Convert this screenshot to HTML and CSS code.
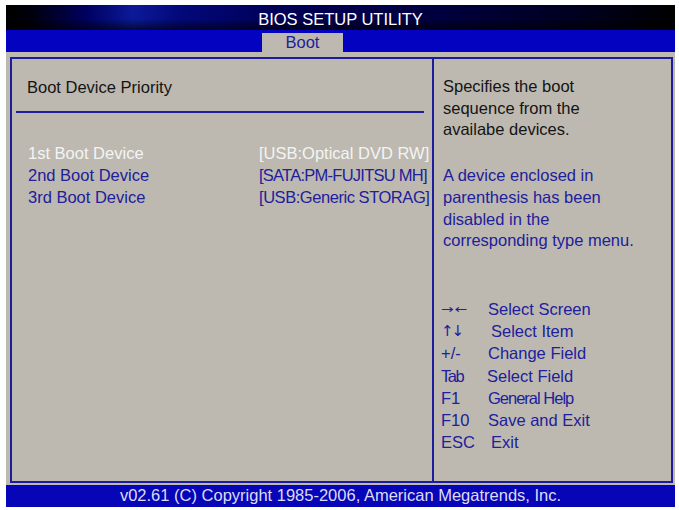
FILE: index.html
```html
<!DOCTYPE html>
<html>
<head>
<meta charset="utf-8">
<title>BIOS Setup Utility</title>
<link rel="stylesheet" href="styles.css">
</head>
<body>
<div class="screen">
  <div class="titlebar">BIOS SETUP UTILITY</div>
  <div class="tabbar"><div class="tab">Boot</div></div>
  <div class="main">
    <div class="frame">
      <div class="left">
        <div class="heading">Boot Device Priority</div>
        <div class="rule"></div>
        <div class="items">
          <div class="label sel">1st Boot Device</div><div class="value sel">[USB:Optical DVD RW]</div>
          <div class="label">2nd Boot Device</div><div class="value tight">[SATA:PM-FUJITSU MH]</div>
          <div class="label">3rd Boot Device</div><div class="value semi">[USB:Generic STORAG]</div>
        </div>
      </div>
      <div class="right">
        <div class="help">Specifies the boot<br>sequence from the<br>availabe devices.</div>
        <div class="note">A device enclosed in<br>parenthesis has been<br>disabled in the<br>corresponding type menu.</div>
        <div class="keys">
          <div class="key lr">&rarr;&larr;</div><div class="desc">Select Screen</div>
          <div class="key ud">&uarr;&darr;</div><div class="desc nudge">Select Item</div>
          <div class="key">+/-</div><div class="desc">Change Field</div>
          <div class="key narrow">Tab</div><div class="desc back">Select Field</div>
          <div class="key">F1</div><div class="desc condensed">General Help</div>
          <div class="key">F10</div><div class="desc">Save and Exit</div>
          <div class="key">ESC</div><div class="desc nudge">Exit</div>
        </div>
      </div>
    </div>
  </div>
  <div class="footer">v02.61 (C) Copyright 1985-2006, American Megatrends, Inc.</div>
</div>
</body>
</html>
```

FILE: styles.css
```css
html, body {
  margin: 0;
  padding: 0;
  background: #ffffff;
}

body {
  font-family: "Liberation Sans", Arial, sans-serif;
  font-size: 16.5px;
}

.screen {
  width: 669px;
  margin: 5px 0 0 6px;
}

.titlebar {
  height: 22px;
  padding-top: 3px;
  line-height: 22px;
  text-align: center;
  color: #ffffff;
  background:
    linear-gradient(to bottom, rgba(0,0,0,0) 55%, rgba(0,0,0,0.65) 100%),
    linear-gradient(to right, #000000 0%, #00000e 4%, #000060 12%, #0b1a98 19%, #03087a 26%, #000058 40%, #00003e 65%, #000020 85%, #000000 100%);
}

.tabbar {
  height: 19px;
  padding-top: 3px;
  background: #0202c0;
  display: flex;
}

.tab {
  margin-left: 256px;
  width: 81px;
  height: 19px;
  line-height: 18px;
  text-align: center;
  background: #bdb9b0;
  color: #20209c;
}

.main {
  background: #bdb9b0;
  padding: 5px 2px 2px 4px;
}

.frame {
  height: 422px;
  border: 2px solid #1c1c9c;
  display: flex;
}

.left {
  width: 420px;
  border-right: 2px solid #1c1c9c;
}

.heading {
  padding: 17px 0 0 15px;
  line-height: 22px;
  color: #141414;
}

.rule {
  height: 2px;
  margin: 13px 8px 0 4px;
  background: #1c1c9c;
}

.items {
  margin-top: 30px;
  padding-left: 16px;
  display: grid;
  grid-template-columns: 231px auto;
  line-height: 21.75px;
  color: #20209c;
}

.sel {
  color: #f4f4f4;
}

.value.tight {
  letter-spacing: -0.75px;
}

.value.semi {
  letter-spacing: -0.45px;
}

.right {
  flex: 1;
  padding: 17px 0 0 9px;
  line-height: 21.7px;
  color: #20209c;
}

.help {
  color: #141414;
}

.note {
  margin-top: 24px;
}

.keys {
  margin-top: 46px;
  margin-left: -2px;
  display: grid;
  grid-template-columns: 47px auto;
  line-height: 22.2px;
}

.key.lr {
  font-family: "DejaVu Sans", sans-serif;
  font-size: 15px;
  letter-spacing: 1px;
  transform: scaleY(0.75);
  transform-origin: left center;
}

.key.ud {
  font-family: "DejaVu Sans", sans-serif;
  font-size: 15px;
  letter-spacing: -2px;
}

.key.narrow {
  letter-spacing: -1.5px;
}

.desc.nudge {
  padding-left: 3px;
}

.desc.back {
  margin-left: -1px;
}

.desc.condensed {
  letter-spacing: -1px;
}

.footer {
  margin-top: 0;
  height: 22px;
  line-height: 21px;
  text-align: center;
  color: #dcdcf0;
  background: #0606b8;
}
```
